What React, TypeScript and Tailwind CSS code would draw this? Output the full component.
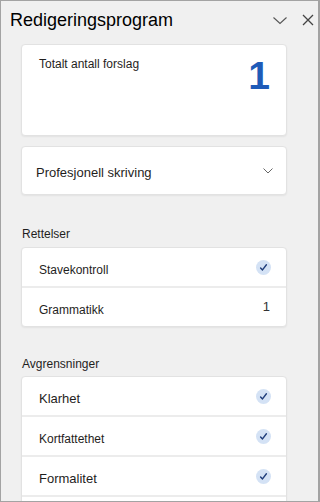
import type { ReactNode } from "react";

function CheckBadge() {
  return (
    <span className="flex h-[15px] w-[15px] items-center justify-center rounded-full bg-[#d4e2f5]">
      <svg width="9" height="9" viewBox="0 0 9 9" fill="none">
        <path d="M1.6 4.9 L3.5 6.9 L7.4 1.8" stroke="#1f3d7a" strokeWidth="1.4" strokeLinecap="round" strokeLinejoin="round" />
      </svg>
    </span>
  );
}

function Divider() {
  return <div className="h-[2px] bg-[#ececec]" />;
}

interface RowProps {
  label: string;
  size?: string;
  right: ReactNode;
}

function Row({ label, size = "text-[12px]", right }: RowProps) {
  return (
    <div className="flex h-[38px] items-center justify-between pl-[17px] pr-[15px]">
      <span className={`pt-[5px] leading-4 text-[#1f1e1d] ${size}`}>{label}</span>
      {right}
    </div>
  );
}

const card = "ml-[20px] w-[266px] rounded-[4px] border border-[#e2e2e2] bg-white shadow-[0_1px_2px_rgba(0,0,0,0.06)]";

export default function App() {
  return (
    <div
      className="h-[502px] w-[320px] overflow-hidden border-y border-l border-r-2 border-[#a3a3a3] bg-[#f0f0f0]"
      style={{ fontFamily: '"Liberation Sans", Arial, sans-serif' }}
    >
      <div className="flex items-center pl-[9px] pr-[4px] pt-[7px]">
        <h1 className="text-[18px] leading-6 text-black">Redigeringsprogram</h1>
        <div className="ml-auto flex items-center gap-[14px]">
          <svg width="16" height="10" viewBox="0 0 16 10" fill="none">
            <path d="M1.5 2.5 L8 8.5 L14.5 2.5" stroke="#555" strokeWidth="1.1" />
          </svg>
          <svg width="12" height="12" viewBox="0 0 12 12" fill="none">
            <path d="M1 1 L11 11 M11 1 L1 11" stroke="#444" strokeWidth="1.3" />
          </svg>
        </div>
      </div>

      <div className={`${card} mt-[12px] flex h-[92px] items-start justify-between pl-[17px] pr-[16px] pt-[11px]`}>
        <span className="text-[12px] leading-4 text-[#1f1e1d]">Totalt antall forslag</span>
        <span className="text-[39px] font-bold leading-none text-[#1e5bb8]">1</span>
      </div>

      <div className={`${card} mt-[10px] flex h-[49px] items-center justify-between pl-[14px] pr-[13px]`}>
        <span className="pt-[4px] text-[13px] leading-4 text-[#1f1e1d]">Profesjonell skriving</span>
        <svg width="10" height="6" viewBox="0 0 10 6" fill="none">
          <path d="M0.5 0.5 L5 5 L9.5 0.5" stroke="#666" strokeWidth="1" />
        </svg>
      </div>

      <div className="mt-[31px] pl-[21px] text-[12px] leading-4 text-[#1f1e1d]">Rettelser</div>
      <div className={`${card} mt-[5px]`}>
        <Row label="Stavekontroll" right={<CheckBadge />} />
        <Divider />
        <Row label="Grammatikk" right={<span className="pr-[1px] text-[13px] leading-4 text-[#333]">1</span>} />
      </div>

      <div className="mt-[29px] pl-[21px] text-[12px] leading-4 text-[#1f1e1d]">Avgrensninger</div>
      <div className={`${card} mt-[4px]`}>
        <Row label="Klarhet" size="text-[13px]" right={<CheckBadge />} />
        <Divider />
        <Row label="Kortfattethet" right={<CheckBadge />} />
        <Divider />
        <Row label="Formalitet" size="text-[13px]" right={<CheckBadge />} />
        <Divider />
        <div className="h-[38px]" />
      </div>
    </div>
  );
}
